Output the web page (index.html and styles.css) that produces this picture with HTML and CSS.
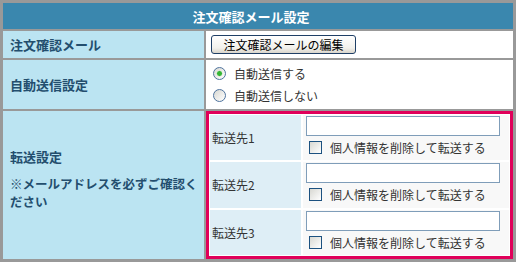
FILE: index.html
```html
<!DOCTYPE html>
<html lang="ja">
<head>
    <meta charset="UTF-8">
    <title>注文確認メール設定</title>
    <link rel="stylesheet" href="styles.css">
</head>
<body>
<div class="settings">
    <div class="settings-head">注文確認メール設定</div>

    <div class="label">注文確認メール</div>
    <div class="value">
        <button class="btn" type="button">注文確認メールの編集</button>
    </div>

    <div class="label">自動送信設定</div>
    <div class="value radios">
        <label class="choice"><input class="radio" type="radio" name="auto" checked>自動送信する</label>
        <label class="choice"><input class="radio" type="radio" name="auto">自動送信しない</label>
    </div>

    <div class="label label-forward">
        <div class="label-title">転送設定</div>
        <div class="label-note">※メールアドレスを必ずご確認く<br>ださい</div>
    </div>
    <div class="value value-forward">
        <div class="forward">
            <div class="forward-name">転送先1</div>
            <div class="forward-field">
                <input class="text" type="text">
                <label class="check"><input class="checkbox" type="checkbox">個人情報を削除して転送する</label>
            </div>
            <div class="forward-name">転送先2</div>
            <div class="forward-field">
                <input class="text" type="text">
                <label class="check"><input class="checkbox" type="checkbox">個人情報を削除して転送する</label>
            </div>
            <div class="forward-name">転送先3</div>
            <div class="forward-field">
                <input class="text" type="text">
                <label class="check"><input class="checkbox" type="checkbox">個人情報を削除して転送する</label>
            </div>
        </div>
    </div>
</div>
</body>
</html>
```

FILE: styles.css
```css
body {
    margin: 0;
    font-family: "Noto Sans CJK JP", "DejaVu Sans", sans-serif;
    font-size: 12px;
    color: #333;
}
.settings {
    width: 516px;
    height: 262px;
    box-sizing: border-box;
    padding: 3px;
    background: #999;
    display: grid;
    grid-template-columns: 201px 307px;
    grid-template-rows: 26px 27px 49px 148px;
    gap: 2px;
}
.settings-head {
    grid-column: 1 / 3;
    background: #3a87ae;
    color: #fff;
    font-weight: bold;
    font-size: 13px;
    display: flex;
    align-items: center;
    justify-content: center;
    padding-right: 14px;
}
.label {
    background: #bbe4f2;
    color: #234e6e;
    font-weight: bold;
    font-size: 13px;
    display: flex;
    align-items: center;
    padding-left: 7px;
}
.value {
    background: #fff;
    display: flex;
    align-items: center;
    padding-left: 5px;
}
.btn {
    width: 145px;
    height: 19px;
    margin: 0;
    padding: 0;
    font: inherit;
    color: #000;
    border: 1px solid #1f3f66;
    border-radius: 3px;
    background: linear-gradient(#fff, #f2f1ec 70%, #d9d5cb);
}
.radios {
    flex-direction: column;
    align-items: flex-start;
    justify-content: center;
    gap: 9px;
    padding-left: 7px;
    padding-bottom: 1px;
}
.choice {
    display: flex;
    align-items: center;
    gap: 8px;
    line-height: 13px;
}
.radio {
    appearance: none;
    width: 13px;
    height: 13px;
    margin: 0;
    border: 1px solid #4f739e;
    border-radius: 50%;
    background: linear-gradient(135deg, #d8d8d2, #fff);
}
.radio:checked {
    background: radial-gradient(circle, #35b435 0 2px, #8fd98f 2.5px, transparent 3.2px),
                linear-gradient(135deg, #d8d8d2, #fff);
}
.label-forward {
    flex-direction: column;
    align-items: flex-start;
    justify-content: center;
    padding-bottom: 10px;
}
.label-title {
    line-height: 15px;
}
.label-note {
    margin-top: 11px;
    line-height: 18px;
    font-size: 12.5px;
}
.value-forward {
    padding: 0;
    align-items: stretch;
}
.forward {
    flex: 1;
    box-sizing: border-box;
    border: 3px solid #e0005a;
    padding: 1px;
    background: #fff;
    display: grid;
    grid-template-columns: 91px 206px;
    grid-template-rows: repeat(3, 1fr);
    gap: 2px;
}
.forward-name {
    background: #deeef6;
    display: flex;
    align-items: center;
    padding-left: 2px;
}
.forward-field {
    background: #f8f8f8;
    padding: 1px 3px;
}
.text {
    display: block;
    box-sizing: border-box;
    width: 194px;
    height: 20px;
    margin: 0;
    border: 1px solid #7f9db9;
    background: #fff;
}
.check {
    display: flex;
    align-items: center;
    gap: 8px;
    margin-top: 3px;
    padding-left: 3px;
}
.checkbox {
    appearance: none;
    width: 13px;
    height: 13px;
    margin: 0;
    border: 1px solid #1c5180;
    background: linear-gradient(135deg, #d8d8d2, #fff);
}
```
